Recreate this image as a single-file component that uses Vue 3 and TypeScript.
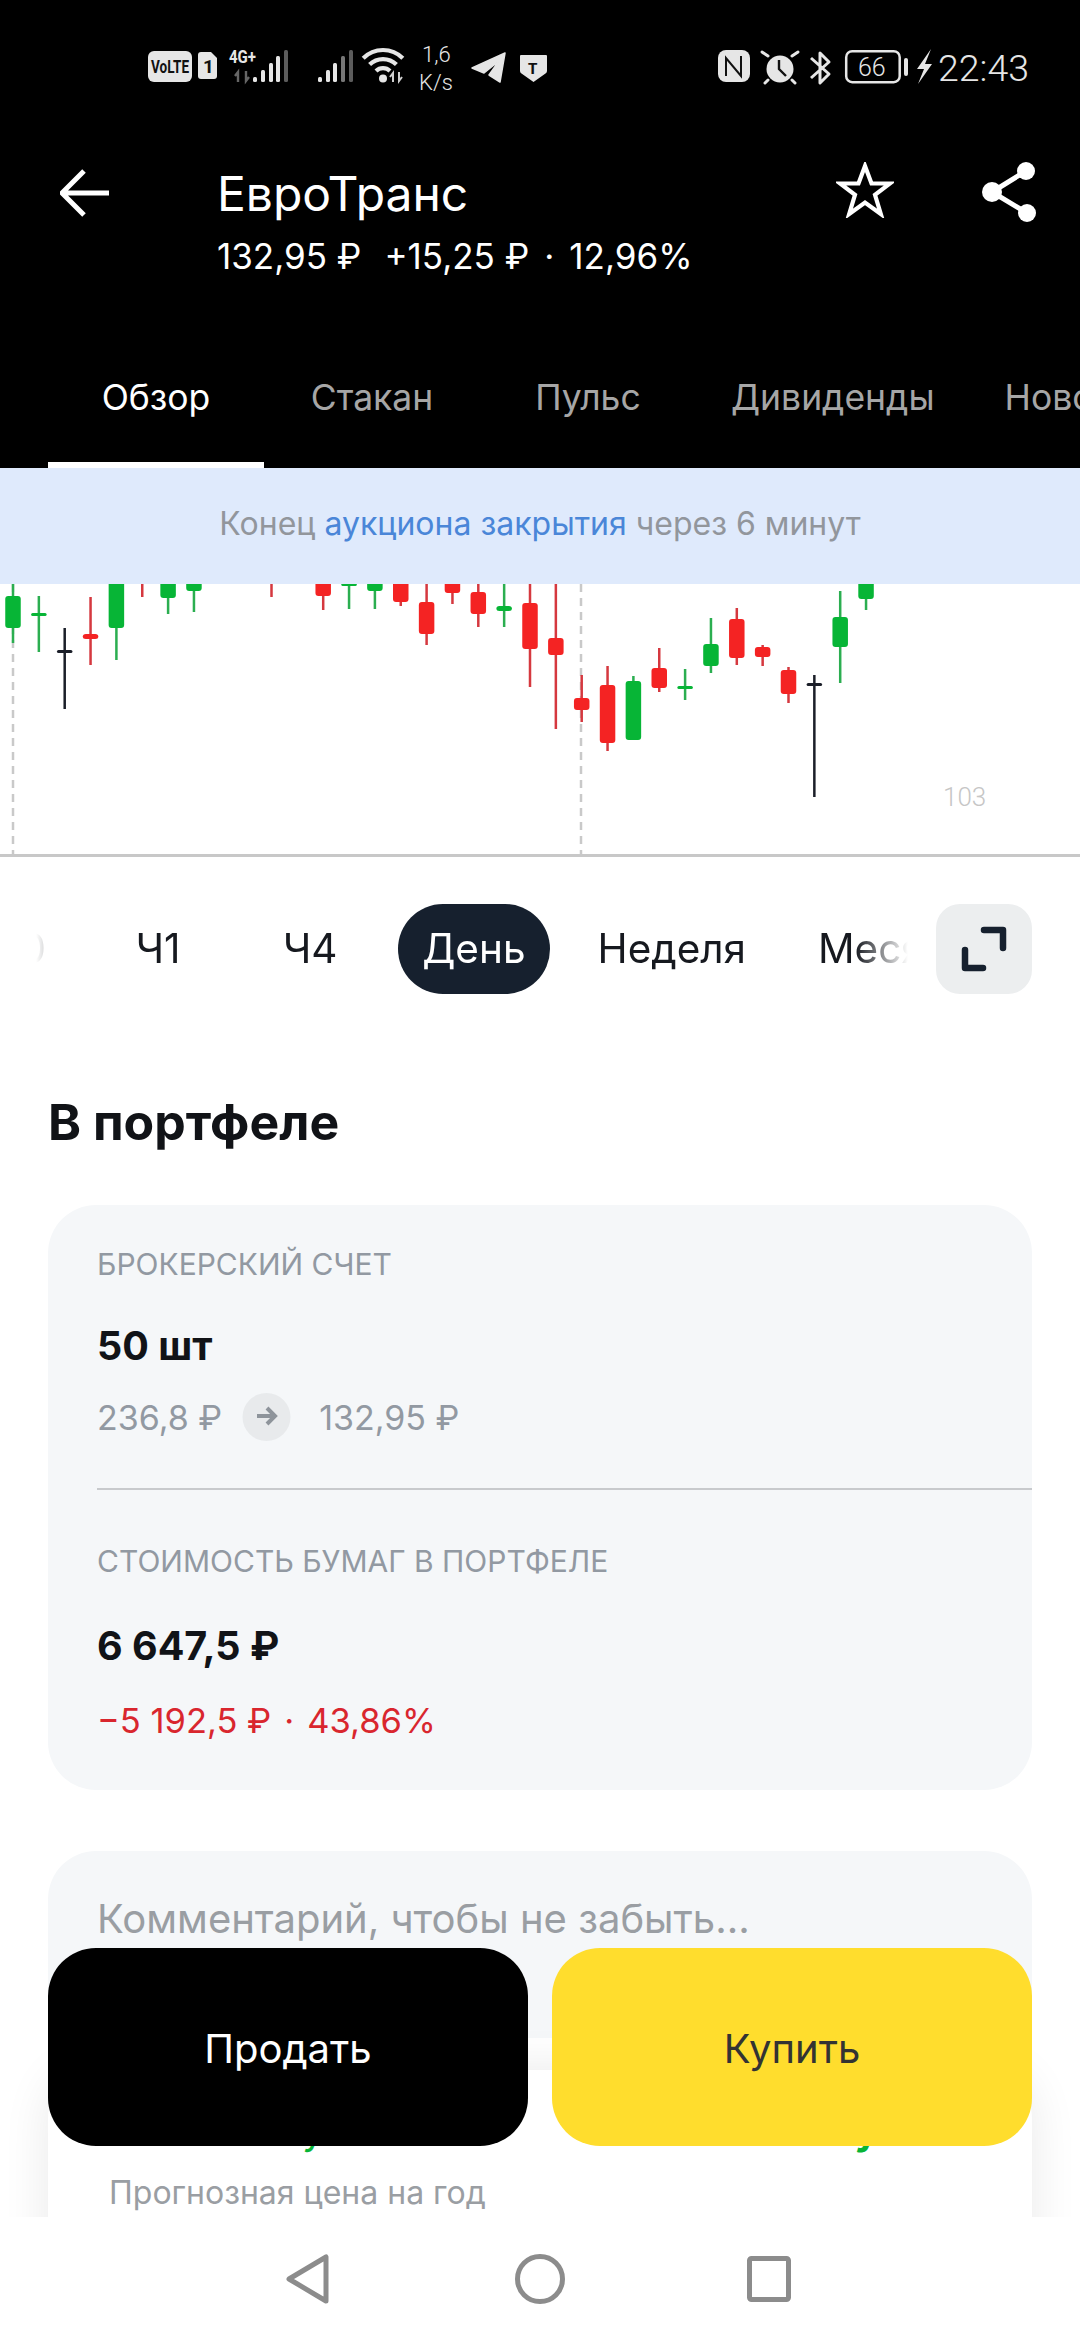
<script setup lang="ts">
type Tone = 'g' | 'r' | 'k'
interface Candle { i: number; c: Tone; wt: number; wb: number; bt: number; bb: number }
const raw: [number, Tone, number, number, number, number][] = [
  [0, 'g', 570, 643, 596, 628], [1, 'g', 596, 652, 613, 616], [2, 'k', 628, 709, 650, 653],
  [3, 'r', 597, 665, 634, 639], [4, 'g', 570, 660, 570, 628], [5, 'r', 570, 597, 570, 572],
  [6, 'g', 570, 614, 570, 598], [7, 'g', 570, 612, 570, 591], [10, 'r', 570, 597, 570, 572],
  [12, 'r', 570, 610, 570, 596], [13, 'g', 570, 609, 583, 586], [14, 'g', 570, 609, 570, 591],
  [15, 'r', 570, 606, 570, 602], [16, 'r', 570, 645, 602, 634], [17, 'r', 570, 604, 570, 593],
  [18, 'r', 570, 627, 592, 614], [19, 'g', 570, 627, 606, 611], [20, 'r', 570, 687, 603, 649],
  [21, 'r', 570, 729, 638, 655], [22, 'r', 675, 722, 698, 710], [23, 'r', 666, 751, 685, 743],
  [24, 'g', 676, 740, 681, 740], [25, 'r', 648, 692, 668, 688], [26, 'g', 669, 700, 686, 689],
  [27, 'g', 618, 673, 644, 666], [28, 'r', 608, 665, 619, 658], [29, 'r', 645, 666, 647, 657],
  [30, 'r', 667, 703, 670, 694], [31, 'k', 675, 797, 683, 686], [32, 'g', 591, 683, 617, 647],
  [33, 'g', 570, 610, 570, 599]
]
const candles: Candle[] = raw.map(([i, c, wt, wb, bt, bb]) => ({ i, c, wt, wb, bt, bb }))
const cx = (i: number): number => 13 + i * 25.85
const bodyFill: Record<Tone, string> = { g: '#07b536', r: '#f42323', k: '#1b1f29' }
const wickFill: Record<Tone, string> = { g: '#2bae50', r: '#d5383f', k: '#1b1f29' }
const tabs: string[] = ['Обзор', 'Стакан', 'Пульс', 'Дивиденды', 'Новости']
const periods: string[] = ['М30', 'Ч1', 'Ч4', 'День', 'Неделя', 'Месяц']
</script>

<template>
  <div class="screen">
    <header class="top">
      <div class="status">
        <svg class="st-left" width="400" height="56" viewBox="148 40 400 56">
          <rect x="148" y="51" width="44" height="31" rx="6" fill="#e6e6e6" />
          <text x="151" y="73" font-size="19" font-weight="700" fill="#111" textLength="38" lengthAdjust="spacingAndGlyphs">VoLTE</text>
          <path d="M201 52H211L217 58V76a3 3 0 0 1-3 3H201a3 3 0 0 1-3-3V55a3 3 0 0 1 3-3Z" fill="#e6e6e6" />
          <text x="203" y="73" font-size="19" font-weight="700" fill="#111">1</text>
          <text x="229" y="63" font-size="18" font-weight="700" fill="#e6e6e6" textLength="27" lengthAdjust="spacingAndGlyphs">4G+</text>
          <path d="M238 82V72l-3 4M246 71V81l3-4" fill="none" stroke="#666" stroke-width="2.4" />
          <rect x="253" y="77" width="4" height="5" rx="1.5" fill="#e6e6e6" />
          <rect x="261" y="70" width="4" height="12" rx="1.5" fill="#e6e6e6" />
          <rect x="269" y="63" width="4" height="19" rx="1.5" fill="#e6e6e6" />
          <rect x="276" y="56" width="4" height="26" rx="1.5" fill="#e6e6e6" />
          <rect x="284" y="50" width="4" height="32" rx="1.5" fill="#5c5c5c" />
          <rect x="318" y="77" width="4" height="5" rx="1.5" fill="#e6e6e6" />
          <rect x="326" y="70" width="4" height="12" rx="1.5" fill="#e6e6e6" />
          <rect x="333" y="63" width="4" height="19" rx="1.5" fill="#e6e6e6" />
          <rect x="341" y="56" width="4" height="26" rx="1.5" fill="#777" />
          <rect x="349" y="50" width="4" height="32" rx="1.5" fill="#5c5c5c" />
          <g fill="none" stroke="#e6e6e6" stroke-width="4.2">
            <path d="M363.2 58.2a28 28 0 0 1 39.6 0" />
            <path d="M369.6 64.6a19 19 0 0 1 26.8 0" />
            <path d="M376 71a10 10 0 0 1 14 0" />
          </g>
          <circle cx="383" cy="78.5" r="4" fill="#e6e6e6" />
          <path d="M393 82V73l-3 4M399 72V81l3-4" fill="none" stroke="#cfcfcf" stroke-width="2" />
          <text x="422" y="62" class="sp" font-size="22" fill="#e6e6e6">1,6</text>
          <text x="419" y="90" class="sp" font-size="22" fill="#e6e6e6">K/s</text>
          <path d="M505 53 472 68 484 73 499 61 489 75 500 82Z" fill="#e6e6e6" stroke="#e6e6e6" stroke-width="1.5" stroke-linejoin="round" />
          <path d="M521 55H546a1 1 0 0 1 1 1V71a3 3 0 0 1-1.5 2.5L533.5 82 521.5 73.500A3 3 0 0 1 520 71V56a1 1 0 0 1 1-1Z" fill="#e6e6e6" />
          <text x="528" y="74" font-size="15" font-weight="800" fill="#111">T</text>
        </svg>
        <svg class="st-right" width="216" height="56" viewBox="718 40 216 56">
          <path d="M726 50H742a8 8 0 0 1 8 8V74a8 8 0 0 1-8 8H726a8 8 0 0 1-8-8V58a8 8 0 0 1 8-8Z" fill="#e6e6e6" />
          <path d="M726 76V58L741 76V56" fill="none" stroke="#111" stroke-width="2" />
          <circle cx="780" cy="69" r="13.500" fill="#e6e6e6" />
          <path d="M779 60V69L786 76" fill="none" stroke="#111" stroke-width="2.400" />
          <path d="M762 52 768 56M798 52 792 56M765 83 768 80M795 83 792 80" stroke="#e6e6e6" stroke-width="3" stroke-linecap="round" />
          <path d="M811 58 829 74 820 83V53L829 62 811 78" fill="none" stroke="#e6e6e6" stroke-width="3" stroke-linejoin="round" />
          <rect x="846.200" y="51.200" width="53.500" height="31" rx="6" fill="none" stroke="#e6e6e6" stroke-width="2.500" />
          <text x="858" y="76" class="sp" font-size="25" fill="#e6e6e6">66</text>
          <rect x="904" y="58" width="4" height="18" rx="2" fill="#e6e6e6" />
          <path d="M931 49 917 69 924 69 918 84 932 64 925 64Z" fill="#e6e6e6" />
        </svg>
        <span class="time">22:43</span>
      </div>

      <div class="title-row">
        <svg class="back" width="50" height="48" viewBox="0 0 50 48">
          <path d="M24 2 2 24 24 46M2 24H49" fill="none" stroke="#fff" stroke-width="5" />
        </svg>
        <div class="title-block">
          <div class="title">ЕвроТранс</div>
          <div class="sub"><span>132,95 ₽</span><span class="delta">+15,25 ₽</span><span class="dot">·</span><span>12,96%</span></div>
        </div>
        <svg class="star" width="58" height="56" viewBox="0 0 58 56">
          <path d="M29 4 35.500 21.500H54L39 32.800 44.800 52 29 40.500 13.200 52 19 32.800 4 21.500H22.500Z" fill="none" stroke="#fff" stroke-width="4.200" stroke-linejoin="miter" />
        </svg>
        <svg class="share" width="56" height="62" viewBox="0 0 56 62">
          <path d="M45 10 11 31 46 52" fill="none" stroke="#fff" stroke-width="5" />
          <circle cx="45" cy="10" r="9" fill="#fff" />
          <circle cx="11" cy="31" r="10" fill="#fff" />
          <circle cx="46" cy="52" r="9" fill="#fff" />
        </svg>
      </div>

      <nav class="tabs">
        <span v-for="(t, n) in tabs" :key="t" class="tab" :class="{ active: n === 0 }">{{ t }}</span>
      </nav>
    </header>

    <div class="banner">Конец&nbsp;<span class="link">аукциона закрытия</span>&nbsp;через 6 минут</div>

    <section class="chart">
      <svg width="1080" height="270" viewBox="0 584 1080 270">
        <line x1="13" y1="584" x2="13" y2="854" stroke="#c9c9c9" stroke-width="2.500" stroke-dasharray="8 6" />
        <line x1="581" y1="584" x2="581" y2="854" stroke="#c9c9c9" stroke-width="2.500" stroke-dasharray="8 6" />
        <g v-for="k in candles" :key="k.i">
          <rect :x="cx(k.i) - 1.25" :y="k.wt" width="2.500" :height="k.wb - k.wt" :fill="wickFill[k.c]" />
          <rect :x="cx(k.i) - 7.75" :y="k.bt" width="15.500" :height="k.bb - k.bt" :rx="k.bb - k.bt < 5 ? 1.5 : 3" :fill="bodyFill[k.c]" />
        </g>
        <text x="943" y="806" class="axis" font-size="26" fill="#c6c6c6">103</text>
      </svg>
    </section>

    <div class="periods">
      <div class="track">
        <span v-for="p in periods" :key="p" class="period" :class="{ on: p === 'День' }">{{ p }}</span>
      </div>
      <div class="expand">
        <svg width="96" height="90" viewBox="0 0 96 90">
          <path d="M48 26H67V44M29 46V64H47" fill="none" stroke="#16202e" stroke-width="6.500" stroke-linecap="round" stroke-linejoin="round" />
        </svg>
      </div>
    </div>

    <h2 class="heading">В портфеле</h2>

    <section class="card">
      <div class="label first">БРОКЕРСКИЙ СЧЕТ</div>
      <div class="strong qty">50 шт</div>
      <div class="price-row">
        <span>236,8 ₽</span>
        <svg class="arrow" width="49" height="48" viewBox="0 0 49 48">
          <circle cx="24.500" cy="24" r="24" fill="#e8eaec" />
          <path d="M15 23H33M25 15 33 23 25 31" fill="none" stroke="#8e949b" stroke-width="4" />
        </svg>
        <span>132,95 ₽</span>
      </div>
      <div class="divider"></div>
      <div class="label second">СТОИМОСТЬ БУМАГ В ПОРТФЕЛЕ</div>
      <div class="strong value">6 647,5 ₽</div>
      <div class="loss"><span>−5 192,5 ₽</span><span class="dot">·</span><span>43,86%</span></div>
    </section>

    <div class="comment">Комментарий, чтобы не забыть...</div>

    <section class="forecast">
      <div class="green-row"><span class="g-left">у</span><span class="g-right">у</span></div>
      <div class="forecast-label">Прогнозная цена на год</div>
    </section>

    <div class="actions">
      <button class="btn sell">Продать</button>
      <button class="btn buy">Купить</button>
    </div>

    <footer class="navbar">
      <svg width="44" height="50" viewBox="0 0 44 50">
        <path d="M40 3V47L3 25Z" fill="none" stroke="#8c8c8c" stroke-width="5" stroke-linejoin="round" />
      </svg>
      <svg width="50" height="50" viewBox="0 0 50 50">
        <circle cx="25" cy="25" r="22.500" fill="none" stroke="#8c8c8c" stroke-width="5" />
      </svg>
      <svg width="44" height="46" viewBox="0 0 44 46">
        <rect x="2.500" y="2.500" width="39" height="41" rx="2" fill="none" stroke="#8c8c8c" stroke-width="5" />
      </svg>
    </footer>
  </div>
</template>

<style scoped>
.screen {
  position: relative;
  width: 1080px;
  height: 2340px;
  overflow: hidden;
  background: #fff;
  font-family: Inter, "Noto Sans", sans-serif;
  color: #111317;
}
svg { display: block; }
svg text { font-family: "Roboto", sans-serif; }
.top {
  height: 468px;
  background: #000;
  color: #fff;
  display: flex;
  flex-direction: column;
}
.status {
  height: 136px;
  display: flex;
  align-items: flex-start;
  padding: 40px 51px 0 148px;
  box-sizing: border-box;
}
.st-right { margin-left: auto; margin-right: 4px; }
.sp { font-weight: 300; }
.time {
  font-family: Roboto, sans-serif;
  font-weight: 300;
  font-size: 37.5px;
  line-height: 56px;
  color: #e6e6e6;
}
.title-row {
  display: flex;
  align-items: flex-start;
  padding-left: 60px;
}
.back { margin-top: 33px; flex: none; }
.title-block { margin-left: 107px; padding-top: 28px; width: 500px; flex: none; }
.title { font-size: 48px; line-height: 60px; font-weight: 400; }
.sub {
  display: flex;
  margin-top: 10px;
  font-size: 35px;
  line-height: 44px;
}
.delta { margin-left: 23px; }
.dot { margin: 0 15px; }
.star { margin-left: 119px; margin-top: 26px; flex: none; }
.share { margin-left: 87px; margin-top: 25px; flex: none; }
.tabs {
  margin-top: auto;
  display: flex;
  padding-left: 48px;
  white-space: nowrap;
}
.tab {
  position: relative;
  flex: none;
  box-sizing: border-box;
  min-width: 216px;
  height: 140px;
  padding: 0 35px;
  line-height: 140px;
  text-align: center;
  font-size: 35.5px;
  color: #a6a6a6;
}
.tab.active { color: #fff; }
.tab.active::after {
  content: "";
  position: absolute;
  left: 0;
  right: 0;
  bottom: 0;
  height: 6px;
  background: #fff;
}
.banner {
  height: 116px;
  padding-bottom: 5px;
  box-sizing: border-box;
  background: #dfeafc;
  display: flex;
  align-items: center;
  justify-content: center;
  font-size: 32px;
  color: #92969c;
}
.link { color: #4a86d8; }
.chart {
  height: 273px;
  box-sizing: border-box;
  border-bottom: 3px solid #c8c8c8;
  overflow: hidden;
}
.axis { font-weight: 300; }
.periods {
  margin-top: 47px;
  height: 90px;
  display: flex;
}
.track {
  width: 912px;
  flex: none;
  display: flex;
  gap: 24px;
  overflow: hidden;
  -webkit-mask-image: linear-gradient(90deg, transparent 36px, #000 90px, #000 855px, transparent 908px);
  mask-image: linear-gradient(90deg, transparent 36px, #000 90px, #000 855px, transparent 908px);
}
.period {
  flex: none;
  box-sizing: border-box;
  min-width: 128px;
  padding: 0 24px;
  height: 90px;
  line-height: 90px;
  text-align: center;
  font-size: 40.5px;
  color: #16191f;
  border-radius: 45px;
}
.period:first-child { margin-left: -65px; }
.period.on { background: #16202e; color: #fff; }
.expand {
  margin-left: 24px;
  width: 96px;
  height: 90px;
  background: #eceeef;
  border-radius: 24px;
}
.heading {
  margin: 98px 0 0 48px;
  font-size: 50px;
  line-height: 60px;
  font-weight: 700;
}
.card {
  margin: 53px 48px 0;
  height: 585px;
  box-sizing: border-box;
  padding: 41px 0 0 49px;
  background: #f5f7f9;
  border-radius: 48px;
}
.label {
  font-size: 30px;
  line-height: 36px;
  color: #9299a2;
}
.strong {
  font-size: 39.5px;
  line-height: 48px;
  font-weight: 700;
}
.qty { margin-top: 40px; }
.price-row {
  margin-top: 23px;
  display: flex;
  align-items: center;
  height: 48px;
  font-size: 34px;
  color: #9299a2;
}
.arrow { margin: 0 28px 0 20px; flex: none; }
.divider {
  margin-top: 47px;
  height: 2px;
  background: #c8cacd;
}
.second { margin-top: 53px; }
.value { margin-top: 43px; }
.loss {
  display: flex;
  margin-top: 29px;
  font-size: 34.5px;
  line-height: 44px;
  color: #d9262e;
}
.loss .dot { margin: 0 13px; }
.comment {
  margin: 61px 48px 0;
  height: 187px;
  box-sizing: border-box;
  padding: 46px 0 0 49px;
  font-size: 40px;
  line-height: 44px;
  color: #9a9ea3;
  background: #f5f7f9;
  border-radius: 48px;
}
.forecast {
  margin: 32px 48px 0;
  height: 400px;
  box-sizing: border-box;
  padding: 36px 0 0 61px;
  background: #fff;
  border-radius: 48px;
  box-shadow: 0 0 48px rgba(0, 0, 0, 0.09);
}
.green-row {
  position: relative;
  display: flex;
  height: 48px;
  font-size: 40px;
  line-height: 48px;
  color: #07b536;
}
.g-left { margin-left: 193px; }
.g-right { margin-left: 530px; font-weight: 700; }
.forecast-label {
  margin-top: 19px;
  font-size: 32px;
  line-height: 40px;
  color: #9a9ea3;
}
.actions {
  position: absolute;
  left: 48px;
  right: 48px;
  top: 1948px;
  display: flex;
  gap: 24px;
}
.btn {
  flex: 1;
  height: 198px;
  padding: 2px 0 0;
  border: 0;
  border-radius: 48px;
  font-family: inherit;
  font-size: 40px;
}
.sell { background: #000; color: #fff; }
.buy { background: #ffdd2d; color: #333; }
.navbar {
  position: absolute;
  left: 0;
  right: 0;
  top: 2217px;
  height: 123px;
  background: #fff;
  display: flex;
  align-items: center;
  padding: 0 0 0 286px;
  box-sizing: border-box;
}
.navbar svg:nth-child(2) { margin-left: 185px; }
.navbar svg:nth-child(3) { margin-left: 182px; }
</style>
